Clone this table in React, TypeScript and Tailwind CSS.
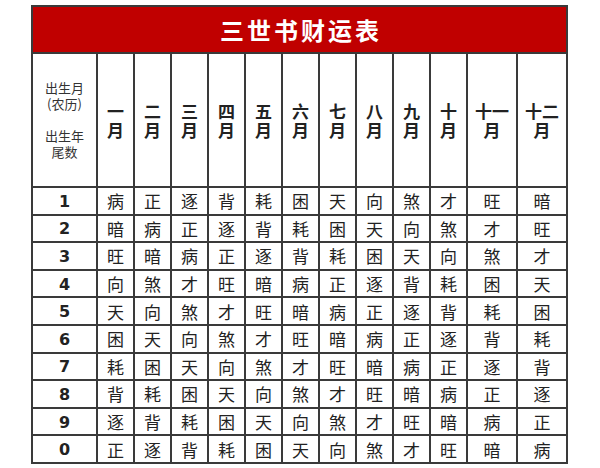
import React from "react";

const months: string[] = [
  "一\n月",
  "二\n月",
  "三\n月",
  "四\n月",
  "五\n月",
  "六\n月",
  "七\n月",
  "八\n月",
  "九\n月",
  "十\n月",
  "十一\n月",
  "十二\n月",
];

const rows: { n: string; v: string }[] = [
  { n: "1", v: "病正逐背耗困天向煞才旺暗" },
  { n: "2", v: "暗病正逐背耗困天向煞才旺" },
  { n: "3", v: "旺暗病正逐背耗困天向煞才" },
  { n: "4", v: "向煞才旺暗病正逐背耗困天" },
  { n: "5", v: "天向煞才旺暗病正逐背耗困" },
  { n: "6", v: "困天向煞才旺暗病正逐背耗" },
  { n: "7", v: "耗困天向煞才旺暗病正逐背" },
  { n: "8", v: "背耗困天向煞才旺暗病正逐" },
  { n: "9", v: "逐背耗困天向煞才旺暗病正" },
  { n: "0", v: "正逐背耗困天向煞才旺暗病" },
];

const cjk = { fontFamily: '"Noto Sans CJK SC", "Noto Sans", sans-serif' };

export default function App() {
  return (
    <div className="w-[600px] h-[468px] bg-white pt-[5px] pl-[31px]" style={cjk}>
      <div className="w-[537px] border-2 border-[#3a3a3a] bg-[#3a3a3a]">
        <div className="h-[45px] bg-[#c00000] flex items-center justify-center">
          <span className="text-white text-[24px] font-bold tracking-[3px] leading-none pl-[3px]">
            三世书财运表
          </span>
        </div>
        <div className="grid grid-cols-[63px_repeat(10,35px)_48px_48px] grid-rows-[132px_repeat(10,25.6px)] gap-[2px] pt-[2px]">
          <div className="bg-white flex items-center justify-center">
            <p className="whitespace-pre-line text-center text-[13px] leading-[16px] text-[#333]">
              {"出生月\n(农历)\n\u00a0\n出生年\n尾数"}
            </p>
          </div>
          {months.map((m, i) => (
            <div key={i} className="bg-white flex items-center justify-center">
              <p className="whitespace-pre-line text-center text-[17px] font-bold leading-[19px] text-[#222]">
                {m}
              </p>
            </div>
          ))}
          {rows.map((r) => (
            <React.Fragment key={r.n}>
              <div
                className="bg-white flex items-center justify-center pt-[2px] text-[16px] font-bold leading-none text-[#222]"
                style={{ fontFamily: '"DejaVu Sans", sans-serif' }}
              >
                {r.n}
              </div>
              {r.v.split("").map((c, j) => (
                <div
                  key={j}
                  className="bg-white flex items-center justify-center text-[17px] leading-none text-[#222]"
                >
                  {c}
                </div>
              ))}
            </React.Fragment>
          ))}
        </div>
      </div>
    </div>
  );
}
